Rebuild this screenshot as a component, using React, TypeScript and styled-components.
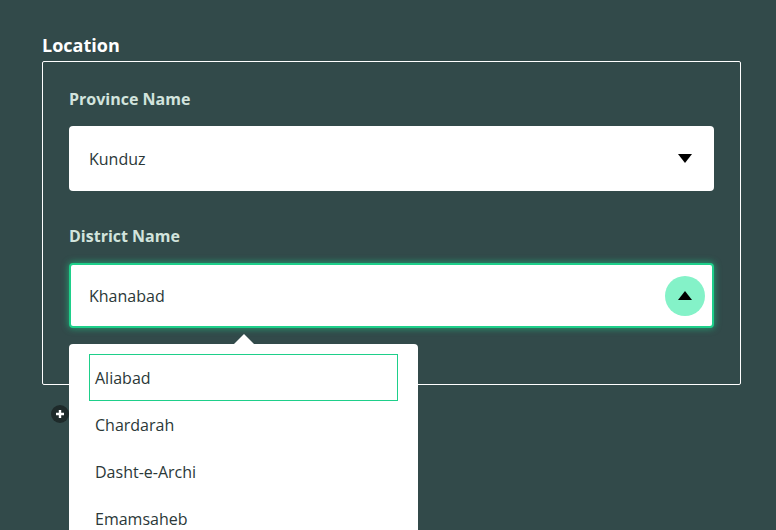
import React from "react";
import styled, { createGlobalStyle } from "styled-components";

const Global = createGlobalStyle`
  html, body { margin: 0; padding: 0; background: #324a4a; }
  body { font-family: "Open Sans", "Noto Sans", sans-serif; overflow: hidden; }
  * { box-sizing: border-box; }
`;

const Page = styled.div`
  width: 776px;
  height: 530px;
  padding: 34px 35px 0 42px;
  position: relative;
  overflow: hidden;
`;

const Legend = styled.div`
  color: #ffffff;
  font-size: 18px;
  font-weight: 700;
  line-height: 23px;
  margin-bottom: 4px;
`;

const Fieldset = styled.div`
  border: 1px solid #ffffff;
  border-radius: 2px;
  padding: 27px 26px 56px 26px;
  display: flex;
  flex-direction: column;
  gap: 35px;
`;

const Field = styled.div`
  display: flex;
  flex-direction: column;
  gap: 17px;
  position: relative;
`;

const Label = styled.div`
  color: #d2e4dd;
  font-size: 16px;
  font-weight: 700;
  line-height: 20px;
`;

const SelectBox = styled.div<{ $open?: boolean }>`
  height: 65px;
  background: #ffffff;
  border-radius: 4px;
  display: flex;
  align-items: center;
  justify-content: space-between;
  border: ${(p) => (p.$open ? "2px solid #1ecf8a" : "none")};
  box-shadow: ${(p) => (p.$open ? "0 0 6px 1px rgba(30, 207, 138, 0.55)" : "none")};
  padding-left: ${(p) => (p.$open ? "18px" : "20px")};
  padding-right: ${(p) => (p.$open ? "7px" : "9px")};
`;

const Value = styled.span`
  color: #2b3838;
  font-size: 16px;
`;

const ArrowWrap = styled.div<{ $open?: boolean }>`
  width: 40px;
  height: 40px;
  border-radius: 50%;
  background: ${(p) => (p.$open ? "#84f2c8" : "transparent")};
  display: flex;
  align-items: center;
  justify-content: center;
`;

const Menu = styled.div`
  position: absolute;
  top: calc(100% + 16px);
  left: 0;
  width: 349px;
  background: #ffffff;
  border-radius: 4px;
  padding: 10px 20px;
  z-index: 5;
  &::before {
    content: "";
    position: absolute;
    top: -10px;
    left: 165px;
    border-left: 10px solid transparent;
    border-right: 10px solid transparent;
    border-bottom: 10px solid #ffffff;
  }
`;

const Option = styled.div<{ $active?: boolean }>`
  height: 47px;
  display: flex;
  align-items: center;
  padding-left: 5px;
  color: #2b3838;
  font-size: 16px;
  border: 1px solid ${(p) => (p.$active ? "#1ecf8a" : "transparent")};
`;

const AddRow = styled.div`
  padding: 20px 0 0 9px;
  display: flex;
`;

const AddButton = styled.div`
  width: 18px;
  height: 18px;
  border-radius: 50%;
  background: #1e2a2a;
  display: flex;
  align-items: center;
  justify-content: center;
`;

const Triangle = ({ up }: { up?: boolean }) => (
  <svg width="14" height="9" viewBox="0 0 14 9">
    {up ? <path d="M7 0 L14 9 L0 9 Z" fill="#000" /> : <path d="M0 0 L14 0 L7 9 Z" fill="#000" />}
  </svg>
);

export default function App() {
  const districts = ["Aliabad", "Chardarah", "Dasht-e-Archi", "Emamsaheb"];
  return (
    <Page>
      <Global />
      <Legend>Location</Legend>
      <Fieldset>
        <Field>
          <Label>Province Name</Label>
          <SelectBox>
            <Value>Kunduz</Value>
            <ArrowWrap>
              <Triangle />
            </ArrowWrap>
          </SelectBox>
        </Field>
        <Field>
          <Label>District Name</Label>
          <SelectBox $open>
            <Value>Khanabad</Value>
            <ArrowWrap $open>
              <Triangle up />
            </ArrowWrap>
          </SelectBox>
          <Menu>
            {districts.map((d, i) => (
              <Option key={d} $active={i === 0}>
                {d}
              </Option>
            ))}
          </Menu>
        </Field>
      </Fieldset>
      <AddRow>
        <AddButton>
          <svg width="10" height="10" viewBox="0 0 10 10">
            <path d="M5 1 V9 M1 5 H9" stroke="#fff" strokeWidth="2.4" />
          </svg>
        </AddButton>
      </AddRow>
    </Page>
  );
}
